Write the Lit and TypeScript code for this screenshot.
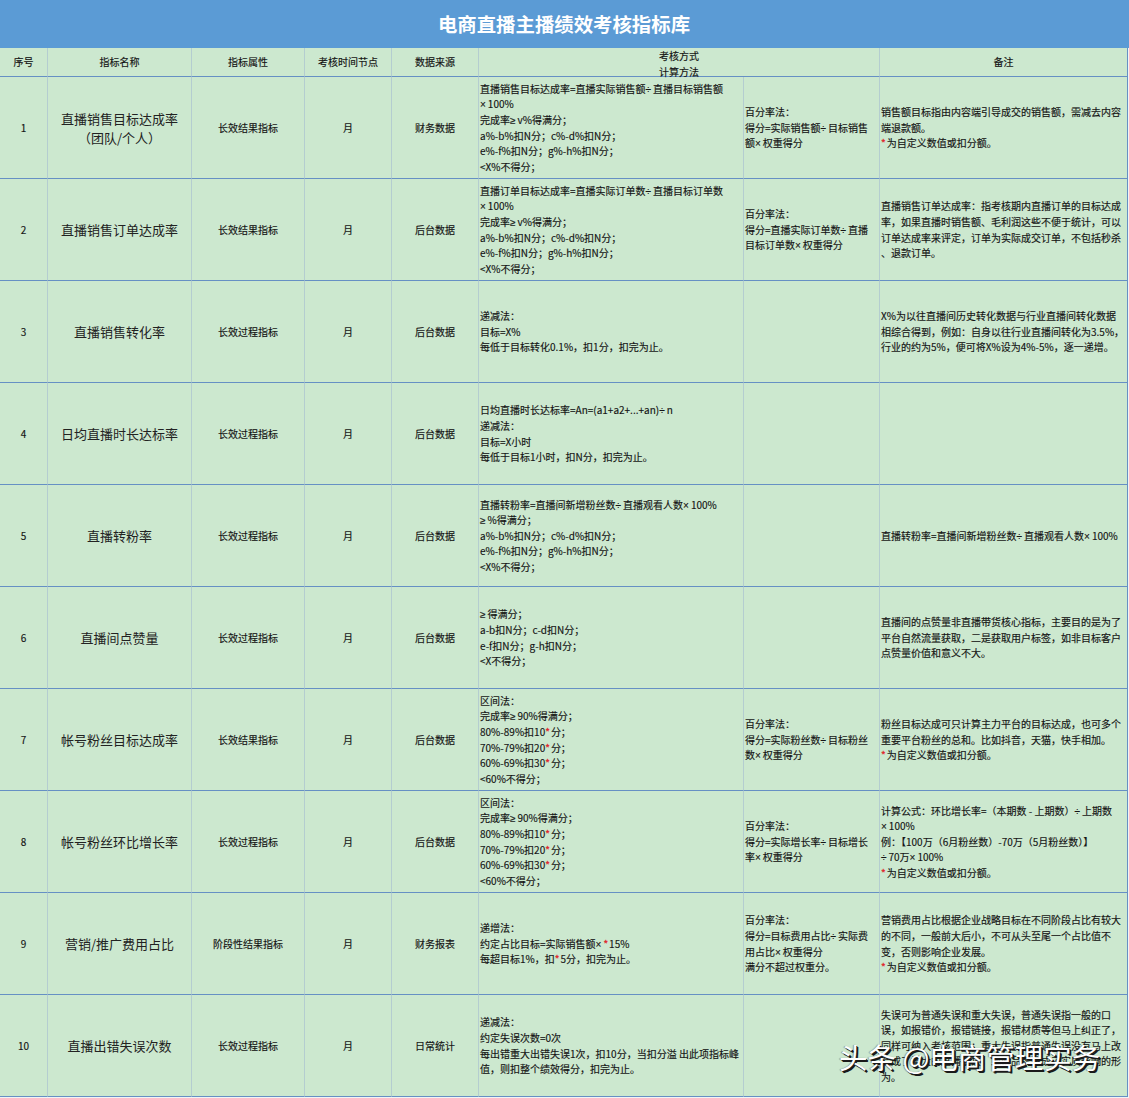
import { LitElement, html, css } from "lit";
import { customElement } from "lit/decorators.js";

interface Row {
  name: string[];
  attr: string;
  source: string;
  method: string[];
  calc: string[];
  note: string[];
}

const DECAY = ["a%-b%扣N分；c%-d%扣N分；", "e%-f%扣N分；g%-h%扣N分；", "<X%不得分；"];
const BANDS = [
  "区间法：",
  "完成率≥90%得满分；",
  "80%-89%扣10*分；",
  "70%-79%扣20*分；",
  "60%-69%扣30*分；",
  "<60%不得分；",
];
const CUSTOM = "*为自定义数值或扣分额。";

const ROWS: Row[] = [
  {
    name: ["直播销售目标达成率", "（团队/个人）"],
    attr: "长效结果指标",
    source: "财务数据",
    method: ["直播销售目标达成率=直播实际销售额÷直播目标销售额", "×100%", "完成率≥v%得满分；", ...DECAY],
    calc: ["百分率法：", "得分=实际销售额÷目标销售", "额×权重得分"],
    note: ["销售额目标指由内容端引导成交的销售额，需减去内容", "端退款额。", CUSTOM],
  },
  {
    name: ["直播销售订单达成率"],
    attr: "长效结果指标",
    source: "后台数据",
    method: ["直播订单目标达成率=直播实际订单数÷直播目标订单数", "×100%", "完成率≥v%得满分；", ...DECAY],
    calc: ["百分率法：", "得分=直播实际订单数÷直播", "目标订单数×权重得分"],
    note: [
      "直播销售订单达成率：指考核期内直播订单的目标达成",
      "率，如果直播时销售额、毛利润这些不便于统计，可以",
      "订单达成率来评定，订单为实际成交订单，不包括秒杀",
      "、退款订单。",
    ],
  },
  {
    name: ["直播销售转化率"],
    attr: "长效过程指标",
    source: "后台数据",
    method: ["递减法：", "目标=X%", "每低于目标转化0.1%，扣1分，扣完为止。"],
    calc: [],
    note: [
      "X%为以往直播间历史转化数据与行业直播间转化数据",
      "相综合得到，例如：自身以往行业直播间转化为3.5%，",
      "行业的约为5%，便可将X%设为4%-5%，逐一递增。",
    ],
  },
  {
    name: ["日均直播时长达标率"],
    attr: "长效过程指标",
    source: "后台数据",
    method: ["日均直播时长达标率=An=(a1+a2+...+an)÷n", "递减法：", "目标=X小时", "每低于目标1小时，扣N分，扣完为止。"],
    calc: [],
    note: [],
  },
  {
    name: ["直播转粉率"],
    attr: "长效过程指标",
    source: "后台数据",
    method: ["直播转粉率=直播间新增粉丝数÷直播观看人数×100%", "≥%得满分；", ...DECAY],
    calc: [],
    note: ["直播转粉率=直播间新增粉丝数÷直播观看人数×100%"],
  },
  {
    name: ["直播间点赞量"],
    attr: "长效过程指标",
    source: "后台数据",
    method: ["≥得满分；", "a-b扣N分；c-d扣N分；", "e-f扣N分；g-h扣N分；", "<X不得分；"],
    calc: [],
    note: [
      "直播间的点赞量非直播带货核心指标，主要目的是为了",
      "平台自然流量获取，二是获取用户标签，如非目标客户",
      "点赞量价值和意义不大。",
    ],
  },
  {
    name: ["帐号粉丝目标达成率"],
    attr: "长效结果指标",
    source: "后台数据",
    method: BANDS,
    calc: ["百分率法：", "得分=实际粉丝数÷目标粉丝", "数×权重得分"],
    note: ["粉丝目标达成可只计算主力平台的目标达成，也可多个", "重要平台粉丝的总和。比如抖音，天猫，快手相加。", CUSTOM],
  },
  {
    name: ["帐号粉丝环比增长率"],
    attr: "长效过程指标",
    source: "后台数据",
    method: BANDS,
    calc: ["百分率法：", "得分=实际增长率÷目标增长", "率×权重得分"],
    note: [
      "计算公式：环比增长率=（本期数 - 上期数）÷上期数",
      "×100%",
      "例：【100万（6月粉丝数）-70万（5月粉丝数）】",
      "÷70万×100%",
      CUSTOM,
    ],
  },
  {
    name: ["营销/推广费用占比"],
    attr: "阶段性结果指标",
    source: "财务报表",
    method: ["递增法：", "约定占比目标=实际销售额×*15%", "每超目标1%，扣*5分，扣完为止。"],
    calc: ["百分率法：", "得分=目标费用占比÷实际费", "用占比×权重得分", "满分不超过权重分。"],
    note: [
      "营销费用占比根据企业战略目标在不同阶段占比有较大",
      "的不同，一般前大后小，不可从头至尾一个占比值不",
      "变，否则影响企业发展。",
      CUSTOM,
    ],
  },
  {
    name: ["直播出错失误次数"],
    attr: "长效过程指标",
    source: "日常统计",
    method: ["递减法：", "约定失误次数=0次", "每出错重大出错失误1次，扣10分，当扣分溢 出此项指标峰", "值，则扣整个绩效得分，扣完为止。"],
    calc: [],
    note: [
      "失误可为普通失误和重大失误，普通失误指一般的口",
      "误，如报错价，报错链接，报错材质等但马上纠正了，",
      "同样可纳入考核范围；重大失误指普通失误没有马上改",
      "造成了重大的直播事故，或对品牌造成了实质影响的形",
      "为。",
    ],
  },
];

@customElement("app-root")
export class AppRoot extends LitElement {
  static styles = css`
    :host {
      display: block;
      width: 1129px;
      height: 1098px;
      overflow: hidden;
      background: #f2f4f3;
      position: relative;
      font-family: "Noto Sans CJK SC", "Liberation Sans", sans-serif;
      color: #141414;
    }
    .title {
      height: 48px;
      box-sizing: border-box;
      padding: 0 1px 2px 0;
      background: #5b9bd5;
      color: #fff;
      font-size: 19.4px;
      font-weight: 700;
      display: flex;
      align-items: center;
      justify-content: center;
    }
    .sheet {
      width: 1128px;
      display: grid;
      grid-template-columns: 48px 144px 113px 87px 87px 265px 136px 248px;
      grid-template-rows: 29px repeat(10, 102px);
      background: #cce8cf;
    }
    .cell {
      box-sizing: border-box;
      min-width: 0;
      overflow: hidden;
      display: flex;
      flex-direction: column;
      justify-content: center;
      border-right: 1px solid #b4cdd0;
      border-bottom: 1px solid #6690c4;
      font-size: 10px;
      line-height: 15.6px;
      white-space: nowrap;
      -webkit-text-stroke: 0.15px #141414;
    }
    .center {
      align-items: center;
      text-align: center;
    }
    .text {
      padding-left: 1px;
      align-items: flex-start;
    }
    .name {
      font-size: 13px;
      line-height: 19px;
      color: #222;
      -webkit-text-stroke: 0;
    }
    .span2 {
      grid-column: span 2;
      justify-content: flex-start;
      overflow: visible;
    }
    .last {
      border-right-color: #6690c4;
    }
    .sym {
      font-family: "Liberation Sans", sans-serif;
      letter-spacing: 2px;
      line-height: 0;
    }
    .star {
      color: #e0262c;
      -webkit-text-stroke: 0.3px #e0262c;
      margin-right: 1px;
      line-height: 0;
    }
    .mark {
      position: absolute;
      left: 839px;
      top: 1038px;
      font-size: 28.5px;
      line-height: 38px;
      white-space: nowrap;
      color: #fff;
      text-shadow: 2px 2px 0 #1a1a1a, 1px 1px 0 #1a1a1a, -1px 0 1px rgba(0, 0, 0, 0.35);
    }
  `;

  private line(text: string) {
    const parts = text.split(/([×÷≥*])/);
    return html`<div>
      ${parts.map((p) =>
        p === "*"
          ? html`<span class="star">*</span>`
          : p === "×" || p === "÷" || p === "≥"
            ? html`<span class="sym">${p}</span>`
            : p
      )}
    </div>`;
  }

  private textCell(lines: string[], last = false) {
    return html`<div class="cell text ${last ? "last" : ""}">
      ${lines.map((l) => this.line(l))}
    </div>`;
  }

  render() {
    const heads = ["序号", "指标名称", "指标属性", "考核时间节点", "数据来源"];
    return html`
      <div class="title">电商直播主播绩效考核指标库</div>
      <div class="sheet">
        ${heads.map((h) => html`<div class="cell center">${h}</div>`)}
        <div class="cell center span2">
          <div>考核方式</div>
          <div>计算方法</div>
        </div>
        <div class="cell center last">备注</div>
        ${ROWS.map(
          (r, i) => html`
            <div class="cell center">${i + 1}</div>
            <div class="cell center name">
              ${r.name.map((n) => html`<div>${n}</div>`)}
            </div>
            <div class="cell center">${r.attr}</div>
            <div class="cell center">月</div>
            <div class="cell center">${r.source}</div>
            ${this.textCell(r.method)} ${this.textCell(r.calc)}
            ${this.textCell(r.note, true)}
          `
        )}
      </div>
      <div class="mark">头条 @电商管理实务</div>
    `;
  }
}
